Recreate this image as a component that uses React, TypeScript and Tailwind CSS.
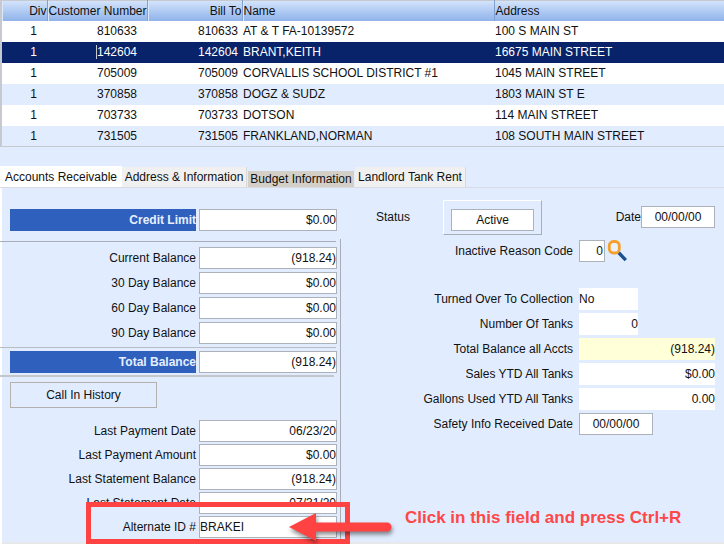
import { useState } from 'react';
import { clsx } from 'clsx';

interface Customer {
  div: number;
  customer: string;
  billTo: string;
  name: string;
  address: string;
}

const CUSTOMERS: Customer[] = [
  { div: 1, customer: '810633', billTo: '810633', name: 'AT & T FA-10139572', address: '100 S MAIN ST' },
  { div: 1, customer: '142604', billTo: '142604', name: 'BRANT,KEITH', address: '16675 MAIN STREET' },
  { div: 1, customer: '705009', billTo: '705009', name: 'CORVALLIS SCHOOL DISTRICT #1', address: '1045 MAIN STREET' },
  { div: 1, customer: '370858', billTo: '370858', name: 'DOGZ & SUDZ', address: '1803 MAIN ST E' },
  { div: 1, customer: '703733', billTo: '703733', name: 'DOTSON', address: '114 MAIN STREET' },
  { div: 1, customer: '731505', billTo: '731505', name: 'FRANKLAND,NORMAN', address: '108 SOUTH MAIN STREET' },
];

const BALANCES = [
  ['Current Balance', '(918.24)'],
  ['30 Day Balance', '$0.00'],
  ['60 Day Balance', '$0.00'],
  ['90 Day Balance', '$0.00'],
];

const PAYMENTS = [
  ['Last Payment Date', '06/23/20'],
  ['Last Payment Amount', '$0.00'],
  ['Last Statement Balance', '(918.24)'],
  ['Last Statement Date', '07/31/20'],
];

const TABS = ['Accounts Receivable', 'Address & Information', 'Budget Information', 'Landlord Tank Rent'];

const toId = (label: string) => label.toLowerCase().replace(/[^a-z0-9]+/g, '-');

function CustomerTable() {
  const [selected, setSelected] = useState('142604');
  const head = 'p-0 font-normal border-r border-[#7f9fd0] shadow-[inset_1px_0_0_#dce9fc]';

  return (
    <table className="w-full table-fixed border-collapse border-y border-l-2 border-[#c6cad0] bg-white">
      <colgroup>
        <col className="w-[46px]" />
        <col className="w-[100px]" />
        <col className="w-[95px]" />
        <col className="w-[252px]" />
        <col />
      </colgroup>
      <thead>
        <tr className="h-[20px] bg-linear-to-b from-[#d3e3fb] to-[#8fb3ea]">
          <th className={clsx(head, 'text-right')}>Div</th>
          <th className={clsx(head, 'text-right')}>Customer Number</th>
          <th className={clsx(head, 'text-right')}>Bill To</th>
          <th className={clsx(head, 'pl-px text-left')}>Name</th>
          <th className="p-0 pl-px text-left font-normal">Address</th>
        </tr>
      </thead>
      <tbody>
        {CUSTOMERS.map((c, i) => {
          const active = c.customer === selected;
          return (
            <tr
              key={c.customer}
              onClick={() => setSelected(c.customer)}
              className={clsx(
                'h-[21px]',
                active ? 'bg-[#082369] text-white' : i > 2 && i % 2 === 1 ? 'bg-[#e1edff]' : 'bg-white',
              )}
            >
              <td className="p-0 pr-2.5 text-right">{c.div}</td>
              <td className="p-0 pr-2.5 text-right">
                <span className={clsx(active && 'border-l border-[#c8c8c8]')}>{c.customer}</span>
              </td>
              <td className="p-0 pr-1 text-right">{c.billTo}</td>
              <td className="p-0 pl-px whitespace-nowrap">{c.name}</td>
              <td className="p-0 pl-px whitespace-nowrap">{c.address}</td>
            </tr>
          );
        })}
      </tbody>
    </table>
  );
}

function TabStrip() {
  const [current, setCurrent] = useState(TABS[0]);
  return (
    <div role="tablist" className="mt-[19px] flex items-end border-b border-[#d9dde3]">
      {TABS.map(tab => (
        <button
          key={tab}
          role="tab"
          aria-selected={tab === current}
          onClick={() => setCurrent(tab)}
          className={clsx(
            'whitespace-nowrap',
            tab === current && 'h-[21px] w-[122px] bg-white',
            tab !== current && tab === 'Budget Information' && 'mx-px h-4 w-[106px] bg-[#d4d0c8]',
            tab !== current && tab !== 'Budget Information' && 'h-5 border-r border-[#d9d9d9] bg-[#f0f0f0]',
            tab === 'Address & Information' && 'w-[125px]',
            tab === 'Landlord Tank Rent' && 'w-[111px]',
          )}
        >
          {tab}
        </button>
      ))}
    </div>
  );
}

// Label and bordered amount box, left side of the screen
function LedgerRow({ label, value, strong }: { label: string; value: string; strong?: boolean }) {
  const id = toId(label);
  return (
    <div className="flex h-[22px] items-stretch pl-2.5">
      <label
        htmlFor={id}
        className={clsx(
          'mr-[3px] flex w-[186px] items-center justify-end',
          strong && 'bg-[#2f60bd] font-bold text-[#e6efff]',
        )}
      >
        {label}
      </label>
      <input
        id={id}
        defaultValue={value}
        className={clsx(
          'w-[138px] border border-[#adb2ba] bg-white outline-none',
          label === 'Alternate ID #' ? 'text-left' : 'text-right',
        )}
      />
    </div>
  );
}

interface AccountRowProps {
  label: string;
  value: string;
  className: string;
}

function AccountRow({ label, value, className }: AccountRowProps) {
  const id = toId(label);
  return (
    <div className="flex h-[22px] items-stretch">
      <label htmlFor={id} className="mr-1.5 flex w-[232px] items-center justify-end">
        {label}
      </label>
      <input id={id} defaultValue={value} className={clsx('outline-none', className)} />
    </div>
  );
}

function Magnifier() {
  return (
    <svg viewBox="0 0 20 22" className="h-[22px] w-5" fill="none">
      <path d="M11.5 12.500 18.800 20.200" stroke="#1b4f8f" strokeWidth="3.4" />
      <rect x="2.300" y="1.500" width="10" height="11.500" rx="4" stroke="#f5a02c" strokeWidth="2.800" fill="#e9f1fd" />
    </svg>
  );
}

// Red frame, arrow and hint drawn over the Alternate ID field
function Callout() {
  return (
    <div className="pointer-events-none">
      <div className="absolute -top-3.5 left-[86px] h-[42px] w-[264px] border-[5px] border-[#ff4343]" />
      <svg
        viewBox="0 0 108 36"
        className="absolute -top-1.5 left-[288px] h-9 w-[108px] drop-shadow-[1px_3px_2px_rgba(0,0,0,0.45)]"
      >
        <path d="M1 17 28 3v9.500h71a4.500 4.500 0 0 1 0 9H28V31Z" fill="#ff4343" />
      </svg>
      <p className="absolute -top-2.5 left-[405px] text-[17px] leading-6 font-bold whitespace-nowrap text-[#ff4747]">
        Click in this field and press Ctrl+R
      </p>
    </div>
  );
}

export default function App() {
  return (
    <div className="min-h-screen overflow-hidden bg-[#e1edff] font-['Liberation_Sans',Arial,sans-serif] text-[12px] leading-4 text-[#111111]">
      <CustomerTable />
      <TabStrip />

      <main className="flex border-b-4 border-l-2 border-b-[#e6e8ea] border-l-white">
        <section className="-ml-0.5 w-[341px] shrink-0 pt-[21px]">
          <LedgerRow label="Credit Limit" value="$0.00" strong />

          <div className="mt-2 border-r border-[#a9adb5] pt-0.5 pb-1">
            <hr className="mr-1 mb-[5px] border-[#a9adb5]" />
            <div className="flex flex-col gap-[3px]">
              {BALANCES.map(([label, value]) => (
                <LedgerRow key={label} label={label} value={value} />
              ))}
            </div>
            <hr className="my-[3px] mr-1 border-[#b9bcc2]" />
            <LedgerRow label="Total Balance" value="(918.24)" strong />
            <hr className="mt-0.5 mr-1.5 border-t-2 border-[#c3c6cb]" />

            <button className="mt-[5px] mb-3 ml-2.5 block h-[26px] w-[147px] border border-[#b4b0ae]">
              Call In History
            </button>

            <div className="flex flex-col gap-0.5">
              {PAYMENTS.map(([label, value]) => (
                <LedgerRow key={label} label={label} value={value} />
              ))}
              <div className="relative">
                <LedgerRow label="Alternate ID #" value="BRAKEI" />
                <Callout />
              </div>
            </div>
          </div>
        </section>

        <section className="w-[374px] pt-3">
          <div className="flex items-start pl-[35px]">
            <span className="mt-[9px] w-[67px]">Status</span>
            <div className="border border-t-white border-r-[#a9adb5] border-b-[#a9adb5] border-l-white px-[7px] pt-2 pb-[3px]">
              <button className="block h-[22px] w-[83px] border border-[#adb2ba] bg-white">Active</button>
            </div>
            <div className="mt-1.5 ml-auto flex items-center">
              <label htmlFor="status-date">Date</label>
              <input
                id="status-date"
                defaultValue="00/00/00"
                className="h-[22px] w-[74px] border border-[#adb2ba] bg-white text-center outline-none"
              />
            </div>
          </div>

          <div className="mt-[5px] flex">
            <AccountRow
              label="Inactive Reason Code"
              value="0"
              className="w-[26px] border border-[#adb2ba] bg-white px-px text-right"
            />
            <button aria-label="Look up reason code" className="ml-0.5">
              <Magnifier />
            </button>
          </div>

          <div className="mt-[26px] flex flex-col gap-[3px]">
            <AccountRow label="Turned Over To Collection" value="No" className="w-[59px] bg-white" />
            <AccountRow label="Number Of Tanks" value="0" className="w-[59px] bg-white text-right" />
            <AccountRow label="Total Balance all Accts" value="(918.24)" className="w-[136px] bg-[#ffffd8] text-right" />
            <AccountRow label="Sales YTD All Tanks" value="$0.00" className="w-[136px] bg-white text-right" />
            <AccountRow label="Gallons Used YTD All Tanks" value="0.00" className="w-[136px] bg-white text-right" />
            <AccountRow
              label="Safety Info Received Date"
              value="00/00/00"
              className="w-[74px] border border-[#adb2ba] bg-white text-center"
            />
          </div>
        </section>
      </main>
    </div>
  );
}
